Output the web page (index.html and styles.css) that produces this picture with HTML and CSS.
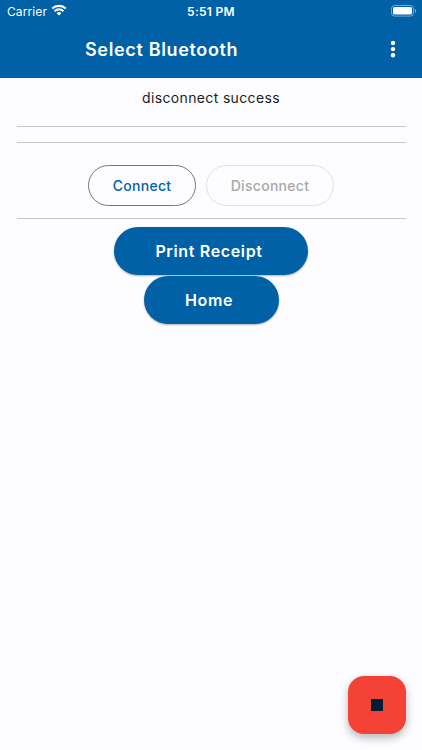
FILE: index.html
```html
<!DOCTYPE html>
<html lang="en">
<head>
    <meta charset="UTF-8">
    <meta name="viewport" content="width=device-width, initial-scale=1.0">
    <title>Select Bluetooth</title>
    <link rel="stylesheet" href="styles.css">
</head>
<body>
    <header>
        <div class="status-bar">
            <div class="carrier">
                <span>Carrier</span>
                <svg class="wifi" width="16" height="12" viewBox="0 0 16 12" fill="none" stroke="#fff" stroke-width="2.1">
                    <path d="M1.2 4.6a9.8 9.8 0 0 1 13.6 0"/>
                    <path d="M3.6 7.2a6.3 6.3 0 0 1 8.8 0"/>
                    <path d="M8 11.6L5.6 9.2a3.4 3.4 0 0 1 4.8 0z" fill="#fff" stroke="none"/>
                </svg>
            </div>
            <span class="time">5:51 PM</span>
            <svg class="battery" width="26" height="12" viewBox="0 0 26 12">
                <rect x="0.5" y="0.5" width="22" height="10.6" rx="3" fill="none" stroke="#fff" stroke-opacity="0.45"/>
                <rect x="2" y="2" width="19" height="7.6" rx="1.6" fill="#fff"/>
                <path d="M24 4v3.8c.8-.3 1.2-1 1.2-1.9S24.8 4.3 24 4z" fill="#fff" fill-opacity="0.5"/>
            </svg>
        </div>
        <div class="app-bar">
            <h1>Select Bluetooth</h1>
            <button class="menu-btn" type="button" aria-label="More options">
                <svg width="6" height="18" viewBox="0 0 6 18" fill="#fff">
                    <circle cx="3" cy="3" r="2.2"/>
                    <circle cx="3" cy="9.1" r="2.2"/>
                    <circle cx="3" cy="15.2" r="2.2"/>
                </svg>
            </button>
        </div>
    </header>

    <main>
        <p class="message">disconnect success</p>
        <hr>
        <hr>
        <div class="connection">
            <button class="outlined connect" type="button">Connect</button>
            <button class="outlined disconnect" type="button" disabled>Disconnect</button>
        </div>
        <hr>
        <div class="actions">
            <button class="filled print" type="button">Print Receipt</button>
            <button class="filled home" type="button">Home</button>
        </div>
    </main>

    <button class="fab" type="button" aria-label="Stop"><span class="stop"></span></button>
</body>
</html>
```

FILE: styles.css
```css
* {
    box-sizing: border-box;
}
body {
    margin: 0;
    height: 750px;
    overflow: hidden;
    font-family: Inter, "Liberation Sans", sans-serif;
    background-color: #fdfcff;
    color: #1a1c1e;
}
button {
    font-family: inherit;
    padding: 0;
    border: none;
    background: none;
}
header {
    height: 77.5px;
    background-color: #0061a6;
    color: #fff;
}
.status-bar {
    height: 22px;
    padding: 0 5px 0 7px;
    display: grid;
    grid-template-columns: 1fr auto 1fr;
    align-items: center;
}
.carrier {
    display: flex;
    align-items: center;
    gap: 4px;
    font-size: 12px;
    letter-spacing: 0.1px;
}
.wifi {
    margin-top: -2px;
}
.time {
    font-size: 12px;
    font-weight: 600;
    letter-spacing: 0.3px;
    padding-right: 2px;
}
.battery {
    justify-self: end;
}
.app-bar {
    height: 55px;
    padding: 0 26px 0 85px;
    display: flex;
    align-items: center;
    justify-content: space-between;
}
h1 {
    margin: 0;
    font-size: 18px;
    font-weight: 600;
    letter-spacing: 0.65px;
}
.menu-btn {
    display: flex;
    margin-top: -1px;
}
main {
    padding: 10.5px 16.5px 0;
}
.message {
    margin: 0 0 18px;
    text-align: center;
    font-size: 14px;
    line-height: 20px;
    letter-spacing: 0.35px;
}
hr {
    height: 1px;
    margin: 0 0 15px;
    border: none;
    background-color: #c8c8d0;
}
.connection {
    display: flex;
    justify-content: center;
    gap: 10px;
    margin: 22px 0 12px;
}
.outlined {
    height: 41px;
    border: 1px solid #74777f;
    border-radius: 21px;
    font-size: 14px;
    font-weight: 500;
    letter-spacing: 0.3px;
    color: #0061a6;
}
.connect {
    width: 108px;
}
.disconnect {
    width: 128px;
    border-color: #e0dfe3;
    color: #a9a9ac;
}
.actions {
    display: flex;
    flex-direction: column;
    align-items: center;
    gap: 1px;
    margin-top: -7px;
}
.filled {
    height: 48px;
    padding-right: 4px;
    border-radius: 24px;
    background-color: #0061a6;
    color: #fff;
    font-size: 16px;
    font-weight: 600;
    letter-spacing: 0.65px;
    box-shadow: 0 1px 2px rgba(0, 0, 0, 0.3);
}
.print {
    width: 194px;
}
.home {
    width: 135px;
}
.fab {
    position: absolute;
    right: 16px;
    bottom: 16px;
    width: 58px;
    height: 58px;
    display: flex;
    align-items: center;
    justify-content: center;
    border-radius: 16px;
    background-color: #f44336;
    box-shadow: 0 4px 8px rgba(0, 0, 0, 0.28);
}
.stop {
    width: 12px;
    height: 12px;
    background-color: #001d36;
}
```
